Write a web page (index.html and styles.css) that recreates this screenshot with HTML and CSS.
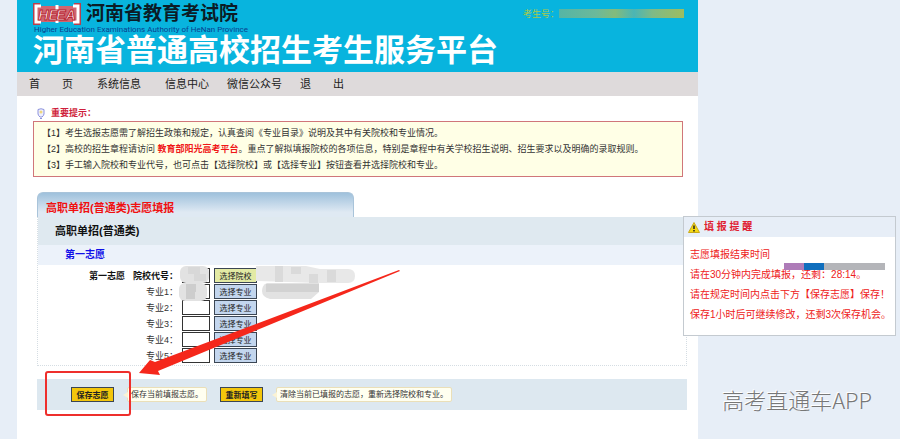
FILE: index.html
```html
<!DOCTYPE html>
<html lang="zh-CN">
<head>
    <meta charset="UTF-8">
    <title>河南省普通高校招生考生服务平台</title>
    <link rel="stylesheet" href="styles.css">
</head>
<body>
    <div class="page">
        <!-- 页头 -->
        <header class="header">
            <div class="header-top">
                <div class="brand">
                    <div class="brand-row">
                        <svg class="logo" width="48" height="22" viewBox="0 0 48 22">
                            <path d="M7 2H2v18h5M41 2h5v18h-5" fill="none" stroke="#b9404c" stroke-width="4"/>
                            <rect x="4" y="3" width="40" height="16" fill="#cf6670"/>
                            <path d="M8 3H3v16h5M40 3h5v16h-5M24 2v5M24 15v5" fill="none" stroke="#fff" stroke-width="3"/>
                            <text x="15" y="17" text-anchor="middle" class="logo-text">HE</text>
                            <text x="33" y="17" text-anchor="middle" class="logo-text">EA</text>
                        </svg>
                        <span class="org">河南省教育考试院</span>
                    </div>
                    <div class="org-en">Higher Education Examinations Authority of HeNan Province</div>
                </div>
                <div class="user">考生号：<span class="user-mask"></span></div>
            </div>
            <h1>河南省普通高校招生考生服务平台</h1>
        </header>

        <!-- 导航 -->
        <nav class="nav">
            <a href="#" class="wide">首　　页</a>
            <a href="#" class="wide">系统信息</a>
            <a href="#">信息中心</a>
            <a href="#">微信公众号</a>
            <a href="#">退　　出</a>
        </nav>

        <main class="main">
            <!-- 重要提示 -->
            <h2 class="tips-title">
                <svg width="8" height="11" viewBox="0 0 8 11">
                    <path d="M1 1.500Q4 0 7 1.500V6Q6.500 8 5 9H3Q1.500 8 1 6Z" fill="#eef0ff" stroke="#8d92dc"/>
                    <circle cx="4" cy="4" r="1.500" fill="#f0d77c"/>
                    <path d="M3 10.500h2" stroke="#8d92dc"/>
                </svg>
                重要提示：
            </h2>
            <div class="tips">
                <p>【1】考生选报志愿需了解招生政策和规定，认真查阅《专业目录》说明及其中有关院校和专业情况。</p>
                <p>【2】高校的招生章程请访问 <a href="#">教育部阳光高考平台</a>。重点了解拟填报院校的各项信息，特别是章程中有关学校招生说明、招生要求以及明确的录取规则。</p>
                <p>【3】手工输入院校和专业代号，也可点击【选择院校】或【选择专业】按钮查看并选择院校和专业。</p>
            </div>

            <!-- 志愿填报 -->
            <form>
                <h2 class="tab">高职单招(普通类)志愿填报</h2>
                <div class="panel">
                    <h3 class="batch">高职单招(普通类)</h3>
                    <h4 class="wish">第一志愿</h4>
                    <div class="fields">
                        <div class="field school">
                            <label for="school"><span>第一志愿</span>院校代号：</label>
                            <input type="text" id="school">
                            <button type="button">选择院校</button>
                        </div>
                        <div class="field">
                            <label for="major1">专业1：</label>
                            <input type="text" id="major1">
                            <button type="button">选择专业</button>
                        </div>
                        <div class="field">
                            <label for="major2">专业2：</label>
                            <input type="text" id="major2">
                            <button type="button">选择专业</button>
                        </div>
                        <div class="field">
                            <label for="major3">专业3：</label>
                            <input type="text" id="major3">
                            <button type="button">选择专业</button>
                        </div>
                        <div class="field">
                            <label for="major4">专业4：</label>
                            <input type="text" id="major4">
                            <button type="button">选择专业</button>
                        </div>
                        <div class="field">
                            <label for="major5">专业5：</label>
                            <input type="text" id="major5">
                            <button type="button">选择专业</button>
                        </div>
                    </div>
                </div>
                <div class="actions">
                    <button type="button">保存志愿</button>
                    <span class="hint">保存当前填报志愿。</span>
                    <button type="reset">重新填写</button>
                    <span class="hint">清除当前已填报的志愿，重新选择院校和专业。</span>
                </div>
            </form>
        </main>
    </div>

    <!-- 填报提醒 -->
    <aside class="reminder">
        <h2>
            <svg width="12" height="11" viewBox="0 0 12 11">
                <path d="M6 0.500L11.500 10.500H0.500Z" fill="#f6d912" stroke="#c9a91a" stroke-linejoin="round"/>
                <path d="M6 3.500V7M6 8v1.500" stroke="#222" stroke-width="1.500"/>
            </svg>
            填 报 提 醒
        </h2>
        <div class="reminder-body">
            <p>志愿填报结束时间</p>
            <p>请在30分钟内完成填报，还剩：28:14。</p>
            <p>请在规定时间内点击下方【保存志愿】保存！</p>
            <p>保存1小时后可继续修改，还剩3次保存机会。</p>
            <div class="mask-bar"></div>
        </div>
    </aside>

    <!-- 打码与标注 -->
    <svg class="marks" width="900" height="439" viewBox="0 0 900 439">
        <rect x="180" y="266" width="29" height="17" rx="6" fill="#e2e2e2"/>
        <path d="M188 267h12v7h-12zM194 274h12v7h-12z" fill="#d8d8d8"/>
        <rect x="179" y="283" width="28" height="18" rx="6" fill="#e2e2e2"/>
        <path d="M186 284h10v8h-10zM186 292h9v7h-9z" fill="#cdcdcd"/>
        <path d="M256 266h50l14 3h28q7 0 7 7t-7 7h-30l-60-2h-2z" fill="#e8e8e8"/>
        <path d="M275 266h8v16h-8zM291 267h10v7h-10zM309 274h9v9h-9zM327 270h9v12h-9z" fill="#dadada"/>
        <path d="M267 283h52v9l-8 7h-41q-8-2-8-8t5-8z" fill="#e2e2e2"/>
        <path d="M266 284h53v8h-53z" fill="#d2d2d2"/>
        <path d="M399 270L155 362L150 360L139 373L160 375L158 371L400 271z" fill="#f5271b"/>
        <rect x="46" y="372" width="84" height="43" rx="2" fill="none" stroke="#ee2f2c" stroke-width="2"/>
    </svg>
    <div class="watermark">高考直通车APP</div>
</body>
</html>
```
FILE: styles.css
```css
* { box-sizing: border-box; }
body { margin: 0; background: #e7eef7; color: #333; font-family: "Liberation Sans", "Noto Sans CJK SC", sans-serif; font-size: 9px; }
h1, h2, h3, h4, p { margin: 0; }
a { color: inherit; text-decoration: none; }
.page { min-height: 100vh; margin: 0 202px 0 17px; background: #fff; }

/* header */
.header { height: 72px; padding: 2px 14px 0 16px; background: #08b4de; }
.header-top { display: flex; justify-content: space-between; }
.brand-row { display: flex; align-items: center; gap: 5px; height: 23px; }
.logo-text { font: italic bold 14px "Liberation Sans", sans-serif; fill: #fff; stroke: #b9222f; stroke-width: 1px; }
.org { color: #0b1c26; font-size: 19px; font-weight: bold; line-height: 23px; }
.org-en { padding-left: 1px; color: #0a3f8e; font-family: Roboto, sans-serif; font-size: 8px; line-height: 9px; }
.user { display: flex; align-items: center; height: 22px; color: #a9c94a; }
.user-mask { width: 125px; height: 9px; background: linear-gradient(90deg, #55b5a5, #6cb99a 30%, #83bb7c 45%, #4bb5b4 60%, #7fba86 75%, #9dbd60); }
h1 { color: #fff; font-size: 31px; font-weight: bold; line-height: 34px; }

.nav { display: flex; gap: 18px; padding-left: 12px; background: #dedadb; color: #222; font-size: 11px; line-height: 24px; }
.nav .wide { margin-right: 6px; }

/* tips */
.main { padding: 10px 11px 0 16px; }
.tips-title { display: flex; align-items: center; gap: 6px; padding-left: 4px; color: #cf1f3c; font-size: 9px; line-height: 15px; }
.tips { margin-right: 4px; padding: 3px 11px 3px 8px; border: 1px solid #d0767a; background: #ffffe6; line-height: 16px; }
.tips p { white-space: nowrap; }
.tips a { color: #f01818; font-weight: bold; }

/* form */
form { margin-top: 15px; padding-left: 4px; }
.tab { width: 317px; height: 25px; padding: 4px 8px 0; border: 1px solid #a9c4da; border-bottom: 0; border-radius: 6px 6px 0 0; background: linear-gradient(#9fc1dc, #dfe9f3 80%); color: #f01010; font-size: 11px; line-height: 22px; }
.panel { border: 1px dotted #d5dde3; border-top: 0; }
.batch { padding-left: 17px; background: #dfe9f0; color: #111; font-size: 11px; line-height: 28px; }
.wish { padding-left: 27px; background: #ecf2fa; color: #1010e8; font-size: 10px; line-height: 20px; }
.fields { display: grid; gap: 1px; padding: 3px 0 2px; }
.field { display: flex; align-items: center; height: 15px; }
.field label { width: 140px; text-align: right; }
.field label span { margin-right: 8px; }
.field input { width: 28px; height: 15px; margin: 0 4px; padding: 0 2px; border: 1px solid #333; font-size: 8px; }
.school label { color: #111; font-weight: bold; }
button { width: 43px; height: 15px; padding: 0; border: 1px solid #3b4654; background: #c3d6ee; color: #222; font: 8px/12px "Noto Sans CJK SC", sans-serif; }
.school button { background: #e3eaa4; }

.actions { display: flex; align-items: center; margin-top: 13px; padding: 0 34px; height: 31px; background: #dde8f0; }
.actions button { background: #f3c60c; color: #222; font-weight: bold; }
.hint { position: relative; margin: 0 13px; padding: 0 3px; border: 1px solid #eadfb8; border-radius: 2px; background: #fffff0; font-size: 8px; line-height: 13px; white-space: nowrap; }
.hint::before { content: ""; position: absolute; left: -5px; top: 4px; border: 3px solid transparent; border-left: 0; border-right: 5px solid #fbf3d4; }

/* reminder window over the page */
.reminder { position: absolute; top: 216px; right: 4px; width: 213px; border: 1px solid #c4cad0; background: #fff; color: #ee2020; }
.reminder h2 { display: flex; align-items: center; gap: 4px; padding-left: 4px; background: #e7eef7; color: #e02030; font-size: 10px; line-height: 20px; }
.reminder-body { position: relative; padding: 8px 6px 10px; font-size: 10px; line-height: 20px; white-space: nowrap; }
.mask-bar { position: absolute; top: 26px; right: 10px; width: 101px; height: 7px; background: linear-gradient(90deg, #ae7cb8 20%, #0f6ebd 20%, #0f6ebd 40%, #b4b5b9 40%); }

.marks { position: absolute; top: 0; left: 0; pointer-events: none; }
.watermark { position: absolute; right: 28px; bottom: 24px; color: #777; font: 300 22px/32px "Noto Sans CJK SC", sans-serif; text-shadow: -1px -1px 0 #fff; }
```
